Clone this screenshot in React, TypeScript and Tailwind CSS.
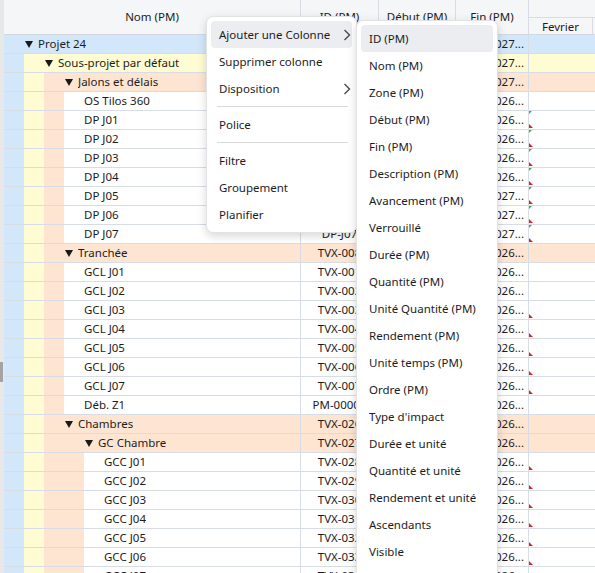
import React from "react";

type Mark = "dp" | "red" | undefined;

interface RowData {
  kind: "group" | "task";
  level: number;
  name: string;
  id: string;
  start: string;
  end: string;
  mark?: Mark;
}

const LEVEL_BG = ["bg-[#d3e7fb]", "bg-[#fffcd3]", "bg-[#fde5d2]", "bg-[#fde5d2]"];

const g = (level: number, name: string, id: string, start: string, end: string): RowData => ({
  kind: "group",
  level,
  name,
  id,
  start,
  end,
});

const t = (level: number, name: string, id: string, start: string, end: string, mark?: Mark): RowData => ({
  kind: "task",
  level,
  name,
  id,
  start,
  end,
  mark,
});

const rows: RowData[] = [
  g(0, "Projet 24", "PRJ-024", "05/01/2026", "30/06/2027..."),
  g(1, "Sous-projet par défaut", "SP-0001", "05/01/2026", "30/06/2027..."),
  g(2, "Jalons et délais", "JAL-001", "05/01/2026", "30/06/2027..."),
  t(3, "OS Tilos 360", "OS-360", "05/01/2026", "05/01/2026..."),
  t(3, "DP J01", "DP-J01", "12/01/2026", "16/02/2026...", "dp"),
  t(3, "DP J02", "DP-J02", "19/01/2026", "23/03/2026...", "dp"),
  t(3, "DP J03", "DP-J03", "26/01/2026", "27/05/2026...", "dp"),
  t(3, "DP J04", "DP-J04", "02/02/2026", "14/09/2026...", "dp"),
  t(3, "DP J05", "DP-J05", "09/02/2026", "18/01/2027...", "dp"),
  t(3, "DP J06", "DP-J06", "16/02/2026", "22/03/2027...", "dp"),
  t(3, "DP J07", "DP-J07", "23/02/2026", "30/06/2027...", "dp"),
  g(2, "Tranchée", "TVX-008", "05/01/2026", "18/12/2026..."),
  t(3, "GCL J01", "TVX-001", "05/01/2026", "13/02/2026..."),
  t(3, "GCL J02", "TVX-002", "16/02/2026", "27/03/2026..."),
  t(3, "GCL J03", "TVX-003", "30/03/2026", "08/05/2026...", "red"),
  t(3, "GCL J04", "TVX-004", "11/05/2026", "19/06/2026...", "red"),
  t(3, "GCL J05", "TVX-005", "22/06/2026", "31/07/2026...", "red"),
  t(3, "GCL J06", "TVX-006", "03/08/2026", "11/09/2026...", "red"),
  t(3, "GCL J07", "TVX-007", "14/09/2026", "23/10/2026...", "red"),
  t(3, "Déb. Z1", "PM-00001", "26/10/2026", "18/12/2026..."),
  g(2, "Chambres", "TVX-026", "05/01/2026", "11/12/2026..."),
  g(3, "GC Chambre", "TVX-027", "05/01/2026", "11/12/2026..."),
  t(4, "GCC J01", "TVX-028", "05/01/2026", "20/02/2026...", "red"),
  t(4, "GCC J02", "TVX-029", "23/02/2026", "10/04/2026...", "red"),
  t(4, "GCC J03", "TVX-030", "13/04/2026", "29/05/2026...", "red"),
  t(4, "GCC J04", "TVX-031", "01/06/2026", "17/07/2026...", "red"),
  t(4, "GCC J05", "TVX-032", "20/07/2026", "04/09/2026...", "red"),
  t(4, "GCC J06", "TVX-033", "07/09/2026", "23/10/2026...", "red"),
  t(4, "GCC J07", "TVX-034", "26/10/2026", "11/12/2026...", "red"),
];

const mainMenu: (string | null)[] = [
  "Ajouter une Colonne",
  "Supprimer colonne",
  "Disposition",
  null,
  "Police",
  null,
  "Filtre",
  "Groupement",
  "Planifier",
];

const withArrow = ["Ajouter une Colonne", "Disposition"];

const columnMenu = [
  "ID (PM)",
  "Nom (PM)",
  "Zone (PM)",
  "Début (PM)",
  "Fin (PM)",
  "Description (PM)",
  "Avancement (PM)",
  "Verrouillé",
  "Durée (PM)",
  "Quantité (PM)",
  "Unité Quantité (PM)",
  "Rendement (PM)",
  "Unité temps (PM)",
  "Ordre (PM)",
  "Type d'impact",
  "Durée et unité",
  "Quantité et unité",
  "Rendement et unité",
  "Ascendants",
  "Visible",
  "Couleur",
];

function Chevron() {
  return (
    <svg width="8" height="12" viewBox="0 0 8 12" className="ml-auto mr-[1px]">
      <polyline points="1.5,1 6.5,6 1.5,11" fill="none" stroke="#4a4a4a" strokeWidth="1.4" />
    </svg>
  );
}

function Caret() {
  return (
    <svg width="8" height="7" viewBox="0 0 8 7" className="ml-px mr-[5px] shrink-0">
      <polygon points="0,0 8,0 4,7" fill="#1a1a1a" />
    </svg>
  );
}

function TableRow({ row }: { row: RowData }) {
  const isGroup = row.kind === "group";
  const rowBg = isGroup ? LEVEL_BG[row.level] : "bg-white";

  return (
    <div className={`flex h-[19px] shrink-0 border-b border-[#d8dde5] ${rowBg}`}>
      {/* Nom */}
      <div className="flex w-[297px] shrink-0 items-center border-r border-[#d8dde5]">
        {Array.from({ length: row.level }).map((_, i) => (
          <div key={i} className={`h-full w-5 shrink-0 ${LEVEL_BG[i]}`} />
        ))}
        <div className="h-full w-5 shrink-0" />
        {isGroup && <Caret />}
        <span className="truncate">{row.name}</span>
      </div>
      {/* ID */}
      <div className="flex w-[78px] shrink-0 items-center justify-center overflow-hidden whitespace-nowrap border-r border-[#d8dde5]">
        {row.id}
      </div>
      {/* Début */}
      <div className="flex w-[77px] shrink-0 items-center justify-center overflow-hidden whitespace-nowrap border-r border-[#d8dde5]">
        {row.start}
      </div>
      {/* Fin */}
      <div className="flex w-[73px] shrink-0 items-center justify-end overflow-hidden whitespace-nowrap border-r border-[#d8dde5] pr-1">
        {row.end}
      </div>
      {/* Gantt */}
      <div className="relative flex-1">
        {row.mark === "dp" && (
          <svg width="3" height="3" viewBox="0 0 3 3" className="absolute left-0 top-0">
            <polygon points="0,0 3,0 0,3" fill="#46b04a" />
          </svg>
        )}
        {row.mark && (
          <svg width="4" height="4" viewBox="0 0 4 4" className="absolute bottom-[1px] left-0">
            <polygon points="0,0 0,4 4,4" fill="#e2231a" />
          </svg>
        )}
      </div>
    </div>
  );
}

export default function App() {
  return (
    <div className="relative flex h-[573px] w-[595px] overflow-hidden bg-white font-['Noto_Sans',sans-serif] text-[11.5px] text-[#1c1c1c]">
      {/* left splitter / scrollbar */}
      <div className="flex w-[4px] shrink-0 flex-col bg-[#e8e8e8]">
        <div className="h-[362px] shrink-0" />
        <div className="h-[20px] w-[3px] shrink-0 bg-[#a3a3a3]" />
      </div>

      <div className="flex min-w-0 flex-1 flex-col">
        {/* Header */}
        <div className="flex h-[35px] shrink-0 border-b border-[#d3d8df] bg-[#f5f6f7]">
          <div className="flex w-[297px] shrink-0 items-center justify-center border-r border-[#d8dde5]">
            Nom (PM)
          </div>
          <div className="flex w-[78px] shrink-0 items-center justify-center border-r border-[#d8dde5]">
            ID (PM)
          </div>
          <div className="flex w-[77px] shrink-0 items-center justify-center border-r border-[#d8dde5]">
            Début (PM)
          </div>
          <div className="flex w-[73px] shrink-0 items-center justify-center border-r border-[#d8dde5]">
            Fin (PM)
          </div>
          <div className="flex flex-1 flex-col">
            <div className="h-[18px] shrink-0 border-b border-[#d8dde5]" />
            <div className="flex flex-1">
              <div className="flex w-[64px] shrink-0 items-center justify-center border-r border-[#d8dde5]">
                Fevrier
              </div>
            </div>
          </div>
        </div>

        {/* Body */}
        <div className="flex flex-col">
          {rows.map((row) => (
            <TableRow key={row.name} row={row} />
          ))}
        </div>
      </div>

      {/* Context menu */}
      <div className="absolute left-[206px] top-[16px] w-[151px] rounded-[7px] border border-[#e2e2e2] bg-white p-1 shadow-[0_3px_10px_rgba(0,0,0,0.16)]">
        {mainMenu.map((item, i) =>
          item === null ? (
            <div key={i} className="flex h-[9px] items-center pl-[6px] pr-1">
              <div className="h-px w-full bg-[#dadada]" />
            </div>
          ) : (
            <div
              key={i}
              className={`flex h-[27px] items-center rounded-[4px] pl-2 pr-0 ${i === 0 ? "bg-[#ebedf0]" : ""}`}
            >
              <span>{item}</span>
              {withArrow.includes(item) && <Chevron />}
            </div>
          )
        )}
      </div>

      {/* Sub menu */}
      <div className="absolute left-[356px] top-[20px] w-[142px] rounded-[7px] border border-[#e2e2e2] bg-white p-1 shadow-[0_3px_10px_rgba(0,0,0,0.16)]">
        {columnMenu.map((item, i) => (
          <div
            key={item}
            className={`flex h-[27px] items-center rounded-[4px] px-2 ${i === 0 ? "bg-[#ebedf0]" : ""}`}
          >
            {item}
          </div>
        ))}
      </div>
    </div>
  );
}
